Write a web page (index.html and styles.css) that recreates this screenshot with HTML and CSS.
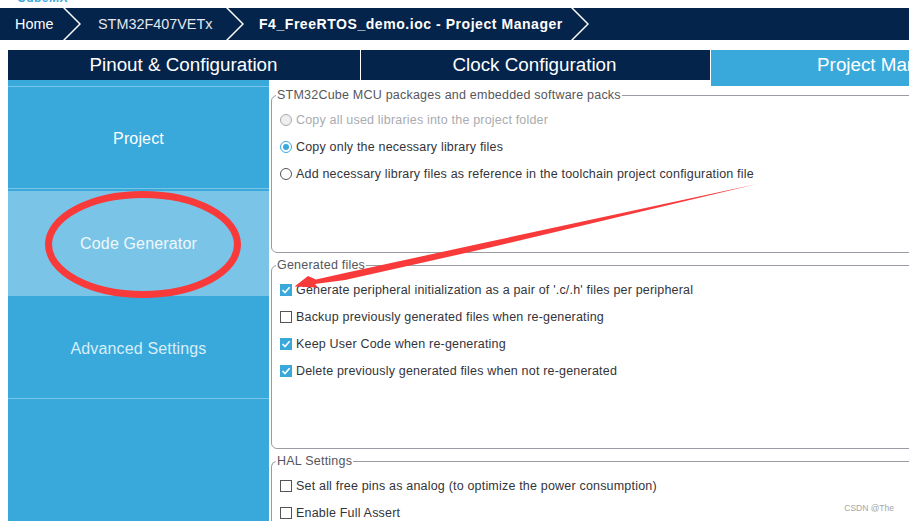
FILE: index.html
```html
<!DOCTYPE html>
<html lang="en">
<head>
    <meta charset="UTF-8">
    <meta name="viewport" content="width=device-width, initial-scale=1.0">
    <title>STM32CubeMX Project Manager</title>
    <link rel="stylesheet" href="styles.css">
</head>
<body>
    <div class="logo-strip"><span class="logo-text">CubeMX</span></div>

    <!-- Breadcrumb -->
    <div class="breadcrumb">
        <span class="crumb crumb-home">Home</span>
        <svg class="chevron" width="18" height="32" viewBox="0 0 18 32"><path d="M0 -1L17 16L0 33" fill="none" stroke="#fff" stroke-width="1.5"/></svg>
        <span class="crumb crumb-chip">STM32F407VETx</span>
        <svg class="chevron" width="18" height="32" viewBox="0 0 18 32"><path d="M0 -1L17 16L0 33" fill="none" stroke="#fff" stroke-width="1.5"/></svg>
        <span class="crumb crumb-current">F4_FreeRTOS_demo.ioc - Project Manager</span>
        <svg class="chevron" width="18" height="32" viewBox="0 0 18 32"><path d="M0 -1L17 16L0 33" fill="none" stroke="#fff" stroke-width="1.5"/></svg>
    </div>

    <!-- Tabs -->
    <div class="tabs">
        <div class="tab tab-pinout">Pinout &amp; Configuration</div>
        <div class="tab tab-clock">Clock Configuration</div>
        <div class="tab tab-project">Project Manager</div>
    </div>

    <div class="main">
        <div class="sidebar">
            <div class="side-item side-project">Project</div>
            <div class="side-item side-code">Code Generator</div>
            <div class="side-item side-advanced">Advanced Settings</div>
        </div>

        <div class="content">
            <fieldset class="group group-packs">
                <legend>STM32Cube MCU packages and embedded software packs</legend>
                <div class="row row-disabled"><span class="radio"></span>Copy all used libraries into the project folder</div>
                <div class="row"><span class="radio radio-on"></span>Copy only the necessary library files</div>
                <div class="row"><span class="radio"></span>Add necessary library files as reference in the toolchain project configuration file</div>
            </fieldset>

            <fieldset class="group group-files">
                <legend>Generated files</legend>
                <div class="row"><span class="check check-on"><svg width="12" height="12" viewBox="0 0 12 12"><path d="M2.5 6L5 8.6L9.6 3.2" fill="none" stroke="#fff" stroke-width="1.6"/></svg></span>Generate peripheral initialization as a pair of '.c/.h' files per peripheral</div>
                <div class="row"><span class="check"></span>Backup previously generated files when re-generating</div>
                <div class="row"><span class="check check-on"><svg width="12" height="12" viewBox="0 0 12 12"><path d="M2.5 6L5 8.6L9.6 3.2" fill="none" stroke="#fff" stroke-width="1.6"/></svg></span>Keep User Code when re-generating</div>
                <div class="row"><span class="check check-on"><svg width="12" height="12" viewBox="0 0 12 12"><path d="M2.5 6L5 8.6L9.6 3.2" fill="none" stroke="#fff" stroke-width="1.6"/></svg></span>Delete previously generated files when not re-generated</div>
            </fieldset>

            <fieldset class="group group-hal">
                <legend>HAL Settings</legend>
                <div class="row"><span class="check"></span>Set all free pins as analog (to optimize the power consumption)</div>
                <div class="row"><span class="check"></span>Enable Full Assert</div>
            </fieldset>
        </div>
    </div>

    <!-- Annotation drawn over the screenshot -->
    <svg class="annotation" width="909" height="521" viewBox="0 0 909 521">
        <ellipse cx="143" cy="244.5" rx="94.5" ry="50" fill="none" stroke="#f93a3a" stroke-width="7"/>
        <path d="M757 184L490 241.5L345 273L316 279.5L308 276L294.5 286.5L318 287.5L315 284L345 280L490 247.5Z" fill="#f93a3a"/>
    </svg>

    <div class="watermark">CSDN @The</div>
</body>
</html>
```

FILE: styles.css
```css
html, body {
    height: 100%;
}

body {
    margin: 0;
    background-color: #fff;
    font-family: "Liberation Sans", Arial, sans-serif;
    color: #333;
    overflow: hidden;
    position: relative;
}

.logo-strip {
    height: 8px;
    overflow: hidden;
    padding-left: 17px;
}

.logo-text {
    display: block;
    margin-top: -9px;
    font-size: 12px;
    line-height: 14px;
    font-weight: bold;
    letter-spacing: 0.5px;
    color: #39a9dc;
}

.breadcrumb {
    height: 32px;
    background-color: #04244b;
    display: flex;
    align-items: center;
    color: #fff;
    font-size: 14.4px;
    overflow: hidden;
}

.chevron {
    flex: none;
}

.crumb {
    white-space: nowrap;
}

.crumb-home {
    margin-left: 15px;
    margin-right: 9px;
    width: 39px;
}

.crumb-chip {
    margin-left: 17px;
    margin-right: 14px;
    width: 114px;
    color: #e4e9ef;
}

.crumb-current {
    margin-left: 15px;
    margin-right: 9px;
    width: 303px;
    font-size: 14px;
    font-weight: bold;
    letter-spacing: 0.55px;
}

.tabs {
    display: flex;
    margin: 10px 0 0 8px;
    height: 30px;
    font-size: 18.8px;
    color: #fff;
    position: relative;
    z-index: 1;
}

.tab {
    display: flex;
    align-items: center;
    justify-content: center;
    background-color: #04244b;
    white-space: nowrap;
    flex: none;
    box-sizing: border-box;
}

.tab-pinout {
    width: 353px;
    border-right: 1px solid #fff;
    padding-right: 1px;
}

.tab-clock {
    width: 350px;
    border-right: 1px solid #fff;
    padding-right: 2px;
}

.tab-project {
    width: 352px;
    height: 36px;
    background-color: #39a9dc;
    padding-bottom: 6px;
    padding-right: 2px;
}

.main {
    display: flex;
    height: 441px;
    padding-left: 8px;
}

.sidebar {
    width: 261px;
    flex: none;
    background-color: #39a9dc;
    padding-top: 6px;
    box-sizing: border-box;
    color: #fff;
    font-size: 16px;
    letter-spacing: 0.15px;
}

.side-item {
    display: flex;
    align-items: center;
    justify-content: center;
    box-sizing: border-box;
}

.side-project {
    height: 103px;
    border-top: 1px solid #7ac4e8;
    border-bottom: 1px solid #7ac4e8;
    margin-bottom: 2px;
    padding-top: 2px;
}

.side-code {
    height: 105px;
    background-color: #7ac4e8;
    color: #f0f8fc;
}

.side-advanced {
    height: 103px;
    border-bottom: 1px solid #7ac4e8;
    padding-top: 4px;
    color: #d8eef9;
}

.content {
    flex: 1;
    margin-left: 2px;
    margin-top: 8px;
    min-width: 0;
}

.group {
    margin: 0 -20px 0 0;
    padding: 0 0 0 8px;
    border: 1px solid #9a9ca3;
    border-radius: 6px 0 0 6px;
    box-sizing: border-box;
    min-width: 0;
}

.group legend {
    padding: 0 1px;
    margin-left: -4px;
    font-size: 12.5px;
    line-height: 15px;
    color: #55565c;
    letter-spacing: 0.22px;
}

.group-packs {
    height: 165px;
    padding-top: 3px;
}

.group-files {
    height: 191px;
    margin-top: 5px;
    padding-top: 3px;
}

.group-hal {
    height: 80px;
    margin-top: 5px;
    padding-top: 3px;
    border-bottom: 0;
}

.row {
    height: 27px;
    display: flex;
    align-items: center;
    font-size: 12.5px;
    letter-spacing: 0.19px;
    color: #33343a;
    white-space: nowrap;
}

.row-disabled {
    color: #a9abb0;
}

.radio,
.check {
    width: 12px;
    height: 12px;
    box-sizing: border-box;
    border: 1px solid #555;
    background-color: #fff;
    margin-right: 4px;
    flex: none;
}

.radio {
    border-radius: 50%;
    position: relative;
}

.row-disabled .radio {
    border-color: #a9abb0;
    background-color: #eee;
}

.radio-on {
    border-color: #39a9dc;
}

.radio-on::after {
    content: "";
    position: absolute;
    left: 2px;
    top: 2px;
    width: 6px;
    height: 6px;
    border-radius: 50%;
    background-color: #39a9dc;
}

.check-on {
    border: 0;
    background-color: #39a9dc;
}

.check svg {
    display: block;
}

.annotation {
    position: absolute;
    left: 0;
    top: 0;
    pointer-events: none;
}

.watermark {
    position: absolute;
    right: 15px;
    top: 503px;
    font-size: 8.5px;
    color: #a5a5a5;
}
```
